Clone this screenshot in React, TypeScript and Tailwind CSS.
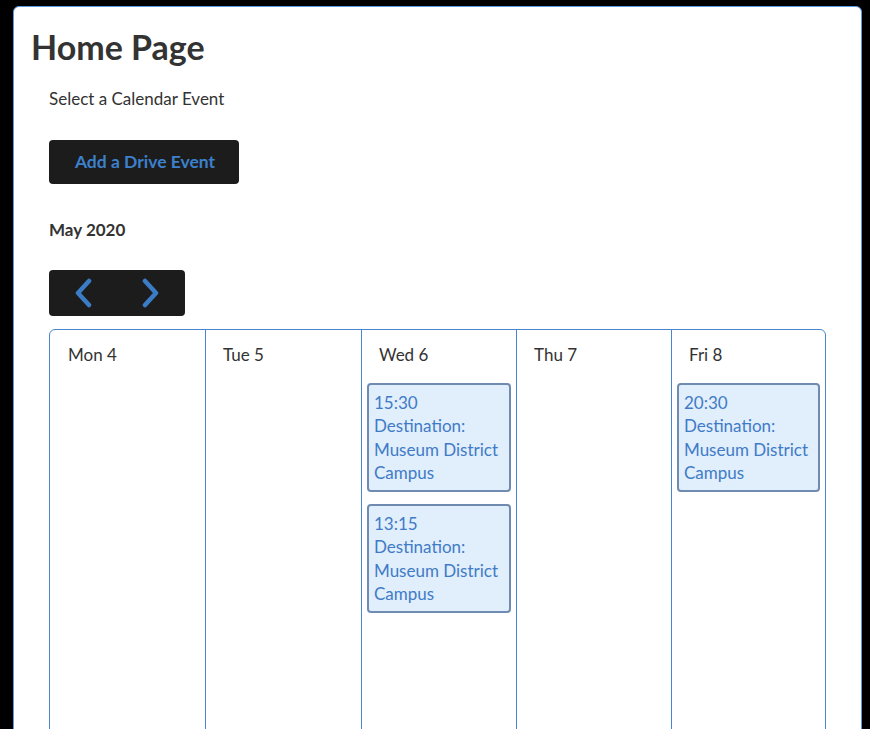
import React from "react";

const days = [
  { label: "Mon 4", events: [] as string[] },
  { label: "Tue 5", events: [] as string[] },
  { label: "Wed 6", events: ["15:30", "13:15"] },
  { label: "Thu 7", events: [] as string[] },
  { label: "Fri 8", events: ["20:30"] },
];

function Chevron({ dir }: { dir: "left" | "right" }) {
  return (
    <svg width="22" height="30" viewBox="0 0 22 30" fill="none">
      <path
        d={dir === "left" ? "M16 3 L5 15 L16 27" : "M6 3 L17 15 L6 27"}
        stroke="#3b7cc6"
        strokeWidth="4.5"
        strokeLinecap="round"
        strokeLinejoin="round"
      />
    </svg>
  );
}

export default function App() {
  return (
    <div
      className="min-h-screen bg-black pt-[6px] pl-[13px] pr-[8px] overflow-hidden"
      style={{ fontFamily: "Lato, 'Open Sans', sans-serif" }}
    >
      <div className="bg-white border border-[#5b9ae0] rounded-[6px] h-[800px] pt-[20px] px-[18px] text-[#333333]">
        <h1 className="text-[34px] font-bold leading-[1.2] -ml-[1px]">Home Page</h1>
        <div className="pl-[17px] pr-[17px]">
          <p className="text-[17px] leading-[24px] mt-[19px]">Select a Calendar Event</p>
          <button className="mt-[29px] h-[44px] w-[190px] bg-[#1c1c1c] rounded-[4px] text-[#3d80cc] font-bold text-[17.5px] flex items-center justify-center pl-[2px]">
            Add a Drive Event
          </button>
          <p className="mt-[34px] text-[17px] leading-[24px] font-bold">May 2020</p>
          <div className="mt-[28px] h-[46px] w-[136px] bg-[#1c1c1c] rounded-[4px] flex items-center justify-center gap-[44px]">
            <Chevron dir="left" />
            <Chevron dir="right" />
          </div>
          <div className="mt-[13px] grid grid-cols-[155px_156px_155px_155px_1fr] border border-[#4a86d0] rounded-t-[6px] h-[420px]">
            {days.map((d, i) => (
              <div
                key={d.label}
                className={`pt-[13px] ${i > 0 ? "border-l border-[#4a86d0]" : ""}`}
              >
                <div className={`${i > 0 ? "pl-[17px]" : "pl-[18px]"} text-[17px] leading-[24px]`}>{d.label}</div>
                <div className={`mt-[16px] ${i > 0 ? "pl-[5px]" : "pl-[6px]"} pr-[5px] flex flex-col gap-[12px]`}>
                  {d.events.map((t) => (
                    <div
                      key={t}
                      className="border-2 border-[#6f8bb0] rounded-[4px] bg-[#e1eefc] text-[#3f7bc6] text-[17px] leading-[23.5px] px-[5px] pt-[6px] pb-[5px]"
                    >
                      <div>{t}</div>
                      <div>Destination:</div>
                      <div>Museum District</div>
                      <div>Campus</div>
                    </div>
                  ))}
                </div>
              </div>
            ))}
          </div>
        </div>
      </div>
    </div>
  );
}
